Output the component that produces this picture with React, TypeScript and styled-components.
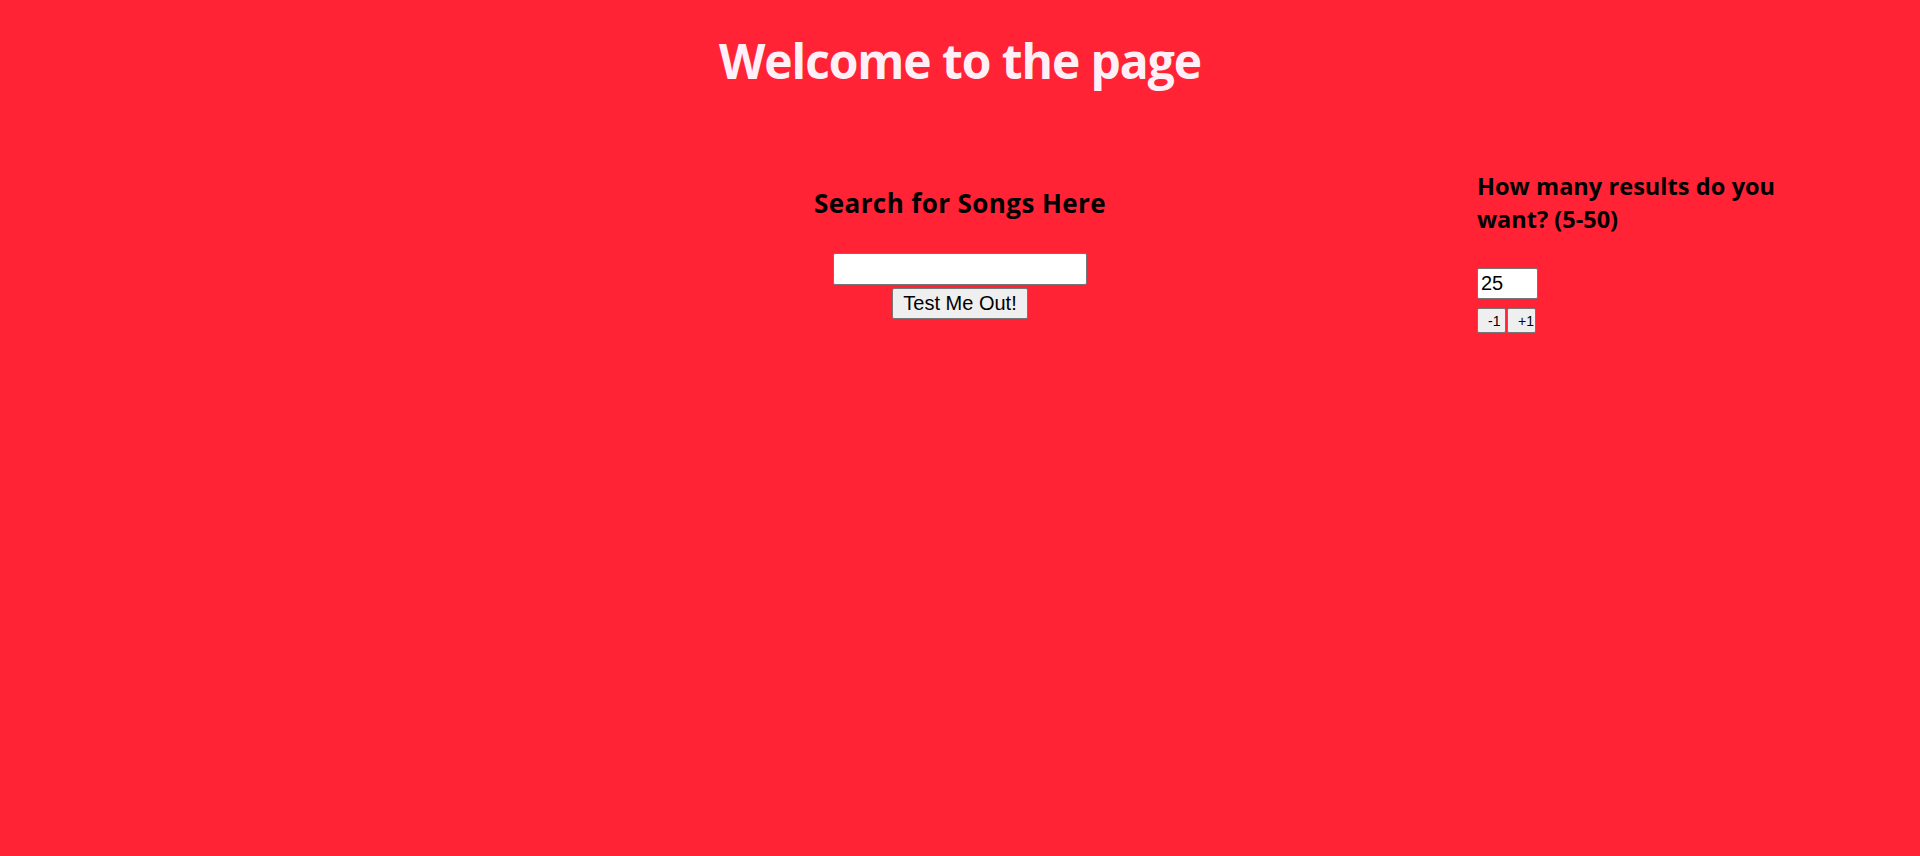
import React from "react";
import styled, { createGlobalStyle } from "styled-components";

const GlobalStyle = createGlobalStyle`
  html, body {
    margin: 0;
    padding: 0;
    background: #ff2335;
  }
  body {
    font-family: "Open Sans", "Noto Sans", sans-serif;
    min-height: 856px;
  }
`;

const Page = styled.div`
  min-height: 856px;
  background: #ff2335;
  display: flex;
  flex-direction: column;
`;

const Header = styled.header`
  padding-top: 32px;
  text-align: center;
`;

const Title = styled.h1`
  margin: 0;
  font-size: 48px;
  line-height: 58px;
  font-weight: 700;
  letter-spacing: -1.1px;
  color: #fff0f7;
`;

const Main = styled.main`
  display: grid;
  grid-template-columns: 1fr 1fr 1fr;
  align-items: start;
`;

const SearchColumn = styled.section`
  grid-column: 2;
  display: flex;
  flex-direction: column;
  align-items: center;
  padding-top: 97px;
`;

const Heading = styled.h2`
  margin: 0;
  font-size: 26px;
  line-height: 33px;
  font-weight: 700;
  letter-spacing: 0.4px;
  color: #000;
`;

const SearchInput = styled.input`
  box-sizing: border-box;
  width: 254px;
  height: 32px;
  margin-top: 33px;
  border: 1px solid #767676;
  border-radius: 2px;
  background: #fff;
  font-family: "Liberation Sans", Arial, sans-serif;
  font-size: 20px;
  padding: 1px 4px;
`;

const NativeButton = styled.button`
  box-sizing: border-box;
  background: #efefef;
  border: 1px solid #767676;
  border-radius: 2px;
  color: #000;
  font-family: "Liberation Sans", Arial, sans-serif;
  cursor: pointer;
`;

const SubmitButton = styled(NativeButton)`
  width: 136px;
  height: 31px;
  margin-top: 3px;
  font-size: 20px;
  padding: 0 6px;
`;

const CountColumn = styled.section`
  grid-column: 3;
  padding: 80px 0 0 197px;
  display: flex;
  flex-direction: column;
  align-items: flex-start;
`;

const CountHeading = styled.h2`
  margin: 0;
  width: 298px;
  font-size: 23.5px;
  line-height: 33px;
  font-weight: 700;
  color: #000;
`;

const JustifiedLine = styled.span`
  display: block;
  white-space: nowrap;
  text-align: justify;
  text-align-last: justify;
`;

const PlainLine = styled.span`
  display: block;
  text-align: left;
`;

const CountInput = styled.input`
  box-sizing: border-box;
  width: 61px;
  height: 31px;
  margin-top: 32px;
  border: 1px solid #767676;
  border-radius: 2px;
  background: #fff;
  font-family: "Liberation Sans", Arial, sans-serif;
  font-size: 20px;
  padding: 1px 3px;
  color: #000;
`;

const StepRow = styled.div`
  display: flex;
  gap: 1px;
  margin-top: 9px;
`;

const StepButton = styled(NativeButton)`
  width: 29px;
  height: 25px;
  font-size: 14px;
  padding: 0 0 0 10px;
  text-align: left;
  overflow: hidden;
  white-space: nowrap;
`;

export default function App() {
  const [count, setCount] = React.useState(25);
  const [query, setQuery] = React.useState("");
  return (
    <Page>
      <GlobalStyle />
      <Header>
        <Title>Welcome to the page</Title>
      </Header>
      <Main>
        <SearchColumn>
          <Heading>Search for Songs Here</Heading>
          <SearchInput value={query} onChange={(e) => setQuery(e.target.value)} />
          <SubmitButton type="button">Test Me Out!</SubmitButton>
        </SearchColumn>
        <CountColumn>
          <CountHeading>
            <JustifiedLine>How many results do you</JustifiedLine>
            <PlainLine>want? (5-50)</PlainLine>
          </CountHeading>
          <CountInput
            type="text"
            value={count}
            onChange={(e) => setCount(Number(e.target.value) || 0)}
          />
          <StepRow>
            <StepButton type="button" onClick={() => setCount((c) => Math.max(5, c - 1))}>
              -1
            </StepButton>
            <StepButton type="button" onClick={() => setCount((c) => Math.min(50, c + 1))}>
              +1
            </StepButton>
          </StepRow>
        </CountColumn>
      </Main>
    </Page>
  );
}
